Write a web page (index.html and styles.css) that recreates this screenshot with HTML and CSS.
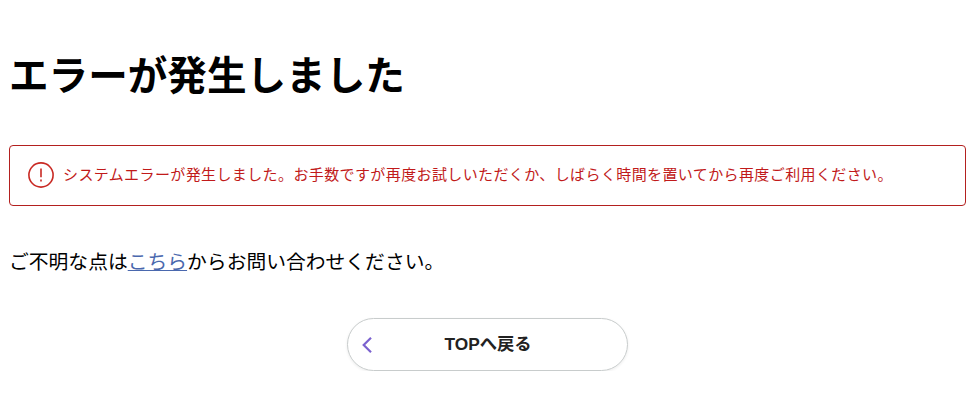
FILE: index.html
```html
<!DOCTYPE html>
<html lang="ja">
<head>
<meta charset="utf-8">
<title>エラーが発生しました</title>
<link rel="stylesheet" href="styles.css">
</head>
<body>
<main class="page">
<h1 class="title">エラーが発生しました</h1>
<div class="alert">
<svg class="alert-icon" viewBox="0 0 26 26"><circle cx="13" cy="13" r="12.1"/><path d="M13 6.5v8.7M13 17.5v2"/></svg>
<p class="alert-text">システムエラーが発生しました。お手数ですが再度お試しいただくか、しばらく時間を置いてから再度ご利用ください。</p>
</div>
<p class="contact">ご不明な点は<a class="link" href="#">こちら</a>からお問い合わせください。</p>
<a class="button" href="#"><svg class="chevron" viewBox="0 0 10 16"><path d="M9 .8 1.7 8 9 15.2"/></svg><span class="button-label">TOPへ戻る</span></a>
</main>
</body>
</html>
```
FILE: styles.css
```css
* { box-sizing: border-box; }
body { margin: 0; background: #fff; color: #000; font-family: "Noto Sans CJK JP", sans-serif; }
.page { padding: 43px 11px 0 9px; }
.title { margin: 0; font-size: 39.6px; line-height: 60px; font-weight: 700; white-space: nowrap; }
.alert { display: flex; align-items: center; height: 61px; margin-top: 42px; padding: 0 18px; border: 1px solid #b3201f; border-radius: 4px; color: #c11a1a; }
.alert-icon { flex: none; width: 26px; height: 26px; margin: -1px 9px 0 0; fill: none; stroke: #c92a24; stroke-width: 1.6; }
.alert-text { margin: 0; padding-bottom: 3px; font-size: 15px; line-height: 24px; letter-spacing: .39px; white-space: nowrap; }
.contact { margin: 40px 0 0; font-size: 19.8px; line-height: 30px; }
.link { color: #4a68ae; text-decoration: underline; }
.button { display: flex; align-items: center; width: 281px; height: 53px; margin: 42px auto 0; padding: 0 14px; border: 1px solid #c8cccc; border-radius: 27px; box-shadow: 0 1px 3px rgba(0,0,0,.08); color: #222; text-decoration: none; }
.chevron { flex: none; width: 10px; height: 16px; fill: none; stroke: #7b62cf; stroke-width: 2.2; }
.button-label { flex: 1; padding: 0 9px 4px 0; text-align: center; font-family: "Liberation Sans", "Noto Sans CJK JP", sans-serif; font-size: 17.3px; font-weight: 700; }
```
